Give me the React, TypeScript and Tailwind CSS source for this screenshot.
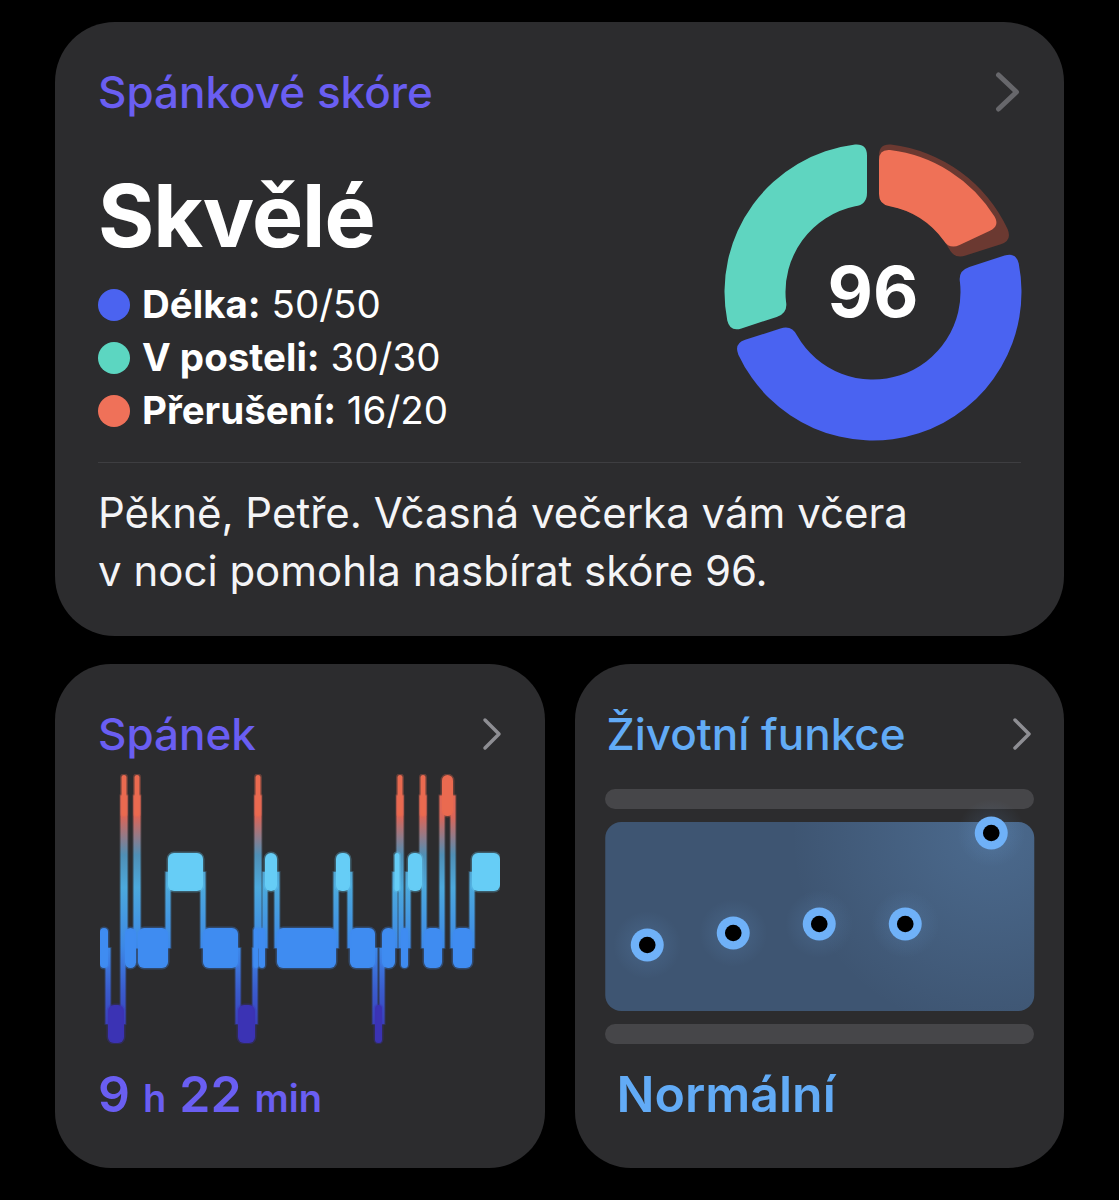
import React from 'react';

type Stage = 'awake' | 'rem' | 'core' | 'deep';

const STAGE: Record<Stage, { y0: number; y1: number; fill: string }> = {
  awake: { y0: 1, y1: 42, fill: '#ea6a50' },
  rem: { y0: 79, y1: 117, fill: '#66cdf6' },
  core: { y0: 154, y1: 194, fill: '#3f8cf1' },
  deep: { y0: 231, y1: 269, fill: '#3b33b4' },
};

// hypnogram: stage, x from, x to (chart px)
const SEGS: [Stage, number, number][] = [
  ['core', 0, 8],
  ['deep', 8, 24],
  ['awake', 23, 25],
  ['core', 25, 36],
  ['awake', 36, 38],
  ['core', 38, 68],
  ['rem', 68, 103],
  ['core', 103, 138],
  ['deep', 138, 155],
  ['core', 155, 157],
  ['awake', 157, 159],
  ['core', 159, 165],
  ['rem', 165, 177],
  ['core', 177, 236],
  ['rem', 236, 250],
  ['core', 250, 275],
  ['deep', 275, 282],
  ['core', 282, 295],
  ['rem', 295, 299],
  ['awake', 299, 301],
  ['core', 301, 308],
  ['rem', 308, 322],
  ['awake', 322, 324],
  ['core', 324, 342],
  ['awake', 342, 353],
  ['core', 353, 372],
  ['rem', 372, 400],
];

const VITALS = [
  [42, 123],
  [128, 111],
  [214, 102],
  [300, 102],
  [386, 11],
];

function sector(a0: number, a1: number, r0: number, r1: number, c: number, h: number) {
  const rad = Math.PI / 180;
  const pt = (r: number, deg: number) =>
    `${(150 + r * Math.sin(deg * rad)).toFixed(2)} ${(150 - r * Math.cos(deg * rad)).toFixed(2)}`;
  const off = (r: number) => Math.asin(h / r) / rad;
  const s = (r: number) => a0 + off(r);
  const e = (r: number) => a1 - off(r);
  const cO = c / r1 / rad;
  const cI = c / r0 / rad;
  const large = e(r1) - s(r1) > 180 ? 1 : 0;
  const largeIn = e(r0) - s(r0) > 180 ? 1 : 0;
  return [
    `M ${pt(r1, s(r1) + cO)}`,
    `A ${r1} ${r1} 0 ${large} 1 ${pt(r1, e(r1) - cO)}`,
    `Q ${pt(r1, e(r1))} ${pt(r1 - c, e(r1 - c))}`,
    `L ${pt(r0 + c, e(r0 + c))}`,
    `Q ${pt(r0, e(r0))} ${pt(r0, e(r0) - cI)}`,
    `A ${r0} ${r0} 0 ${largeIn} 0 ${pt(r0, s(r0) + cI)}`,
    `Q ${pt(r0, s(r0))} ${pt(r0 + c, s(r0 + c))}`,
    `L ${pt(r1 - c, s(r1 - c))}`,
    `Q ${pt(r1, s(r1))} ${pt(r1, s(r1) + cO)}`,
    'Z',
  ].join(' ');
}

function Chevron({ big }: { big?: boolean }) {
  if (big) {
    return (
      <svg viewBox="0 0 26 40" className="h-[40px] w-[26px] text-[#67676b]" fill="none" stroke="currentColor" strokeWidth={5} strokeLinecap="round" strokeLinejoin="round">
        <path d="M3.5 3 L21.5 20 L3.5 37" />
      </svg>
    );
  }
  return (
    <svg viewBox="0 0 20 34" className="h-[34px] w-[20px] text-[#8e8e93]" fill="none" stroke="currentColor" strokeWidth={3.5} strokeLinecap="round" strokeLinejoin="round">
      <path d="M3 3 L17 17 L3 31" />
    </svg>
  );
}

function Donut() {
  return (
    <svg viewBox="0 0 300 300" className="-mr-[2px] h-[300px] w-[300px] shrink-0">
      <path d={sector(0, 72, 87.5, 148.5, 12, 6)} fill="#6b3931" />
      <path d={sector(0, 65, 87.5, 143, 11, 6)} fill="#ef7157" />
      <path d={sector(72, 252, 87.5, 148.5, 12, 6)} fill="#4a63f1" />
      <path d={sector(252, 360, 87.5, 148.5, 12, 6)} fill="#5fd5c0" />
      <text x="150" y="175" textAnchor="middle" fill="#ffffff" fontSize="70" fontWeight="700" fontFamily="Inter, sans-serif">
        96
      </text>
    </svg>
  );
}

function LegendRow({ dot, label, value }: { dot: string; label: string; value: string }) {
  return (
    <li className="flex h-[53px] items-center gap-[12px]">
      <span className={`h-[32px] w-[32px] shrink-0 rounded-full ${dot}`} />
      <span className="text-[38.5px] leading-none">
        <b className="font-bold">{label}</b> {value}
      </span>
    </li>
  );
}

function ScoreCard() {
  return (
    <section className="h-[614px] rounded-[60px] bg-[#2c2c2e] px-[43px] pt-[50px]">
      <div className="flex h-[40px] items-center justify-between">
        <h2 className="text-[44px] font-medium leading-[40px] text-[#6a5ef2]">Spánkové skóre</h2>
        <Chevron big />
      </div>
      <div className="mt-[30px] flex justify-between">
        <div className="pt-[30px]">
          <div className="text-[86px] font-bold leading-[88px] tracking-[-1px]">Skvělé</div>
          <ul className="mt-[18px]">
            <LegendRow dot="bg-[#4b63f0]" label="Délka:" value="50/50" />
            <LegendRow dot="bg-[#5cd6c1]" label="V posteli:" value="30/30" />
            <LegendRow dot="bg-[#ef7159]" label="Přerušení:" value="16/20" />
          </ul>
        </div>
        <Donut />
      </div>
      <div className="mt-[20px] h-px bg-[#3e3e41]" />
      <p className="mt-[21px] text-[42px] leading-[58px] text-[#f4f4f6]">
        Pěkně, Petře. Včasná večerka vám včera
        <br />v noci pomohla nasbírat skóre 96.
      </p>
    </section>
  );
}

function SleepChart() {
  const mid = (s: Stage) => (STAGE[s].y0 + STAGE[s].y1) / 2;
  return (
    <svg viewBox="0 0 400 270" className="ml-[2px] mt-[20px] block h-[270px] w-[400px]">
      <defs>
        <linearGradient id="hyp" gradientUnits="userSpaceOnUse" x1="0" y1="0" x2="0" y2="270">
          <stop offset="0" stopColor="#e8664f" />
          <stop offset="0.16" stopColor="#d8665a" />
          <stop offset="0.3" stopColor="#4f8fb5" />
          <stop offset="0.42" stopColor="#4ca9dc" />
          <stop offset="0.64" stopColor="#3d88e6" />
          <stop offset="0.8" stopColor="#3a5ccd" />
          <stop offset="1" stopColor="#3a33b4" />
        </linearGradient>
      </defs>
      {SEGS.slice(1).map(([s, x0], i) => {
        const a = mid(SEGS[i][0]);
        const b = mid(s);
        if (a === b) return null;
        return (
          <rect
            key={'c' + i}
            x={x0 - 2.5}
            width={5}
            y={Math.min(a, b)}
            height={Math.abs(a - b)}
            fill="url(#hyp)"
            stroke="url(#hyp)"
            strokeOpacity={0.3}
            strokeWidth={2}
          />
        );
      })}
      {SEGS.map(([s, x0, x1], i) => {
        const st = STAGE[s];
        const w = Math.max(x1 - x0, 5);
        const x = (x0 + x1) / 2 - w / 2;
        return (
          <rect
            key={i}
            x={x}
            y={st.y0}
            width={w}
            height={st.y1 - st.y0}
            rx={Math.min(6, w / 2)}
            fill={st.fill}
            stroke={st.fill}
            strokeOpacity={0.3}
            strokeWidth={3}
          />
        );
      })}
    </svg>
  );
}

function SleepCard() {
  return (
    <section className="h-[504px] rounded-[56px] bg-[#2c2c2e] pl-[43px] pr-[43px] pt-[50px]">
      <div className="flex h-[40px] items-center justify-between">
        <h2 className="text-[44px] font-medium leading-[40px] text-[#6a5ef2]">Spánek</h2>
        <Chevron />
      </div>
      <SleepChart />
      <div className="mt-[24px] flex items-baseline gap-[13px] font-semibold leading-[52px] text-[#6a5ef2]">
        <span className="text-[50px]">9</span>
        <span className="text-[38px]">h</span>
        <span className="text-[50px]">22</span>
        <span className="text-[38px]">min</span>
      </div>
    </section>
  );
}

function VitalsCard() {
  return (
    <section className="h-[504px] rounded-[56px] bg-[#2c2c2e] px-[30px] pt-[50px]">
      <div className="flex h-[40px] items-center justify-between pl-[2px] pr-[2px]">
        <h2 className="text-[44px] font-medium leading-[40px] text-[#62abf6]">Životní funkce</h2>
        <Chevron />
      </div>
      <div className="mt-[35px] flex flex-col gap-[13px]">
        <div className="h-[20px] rounded-full bg-[#464649]" />
        <svg viewBox="0 0 429 189" className="block h-[189px] w-full overflow-visible">
          <defs>
            <radialGradient id="glowTR" cx="386" cy="11" r="200" gradientUnits="userSpaceOnUse">
              <stop offset="0" stopColor="#7ab4f0" stopOpacity="0.22" />
              <stop offset="1" stopColor="#7ab4f0" stopOpacity="0" />
            </radialGradient>
            <radialGradient id="glowDot">
              <stop offset="0" stopColor="#7ab8fa" stopOpacity="0.16" />
              <stop offset="1" stopColor="#7ab8fa" stopOpacity="0" />
            </radialGradient>
          </defs>
          <rect width="429" height="189" rx="16" fill="#3e5572" />
          <rect width="429" height="189" rx="16" fill="url(#glowTR)" />
          {VITALS.map(([x, y], i) => (
            <circle key={'g' + i} cx={x} cy={y} r={34} fill="url(#glowDot)" />
          ))}
          {VITALS.map(([x, y], i) => (
            <g key={i}>
              <circle cx={x} cy={y} r={16.5} fill="#6fb1f8" />
              <circle cx={x} cy={y} r={8.3} fill="#000000" />
            </g>
          ))}
        </svg>
        <div className="h-[20px] rounded-full bg-[#464649]" />
      </div>
      <div className="ml-[12px] mt-[24px] text-[50px] font-semibold leading-[52px] text-[#62abf6]">Normální</div>
    </section>
  );
}

export default function App() {
  return (
    <div className="min-h-[1200px] w-full bg-black px-[55px] pt-[22px] font-['Inter',sans-serif] text-white antialiased">
      <ScoreCard />
      <div className="mt-[28px] grid grid-cols-2 gap-[30px]">
        <SleepCard />
        <VitalsCard />
      </div>
    </div>
  );
}
